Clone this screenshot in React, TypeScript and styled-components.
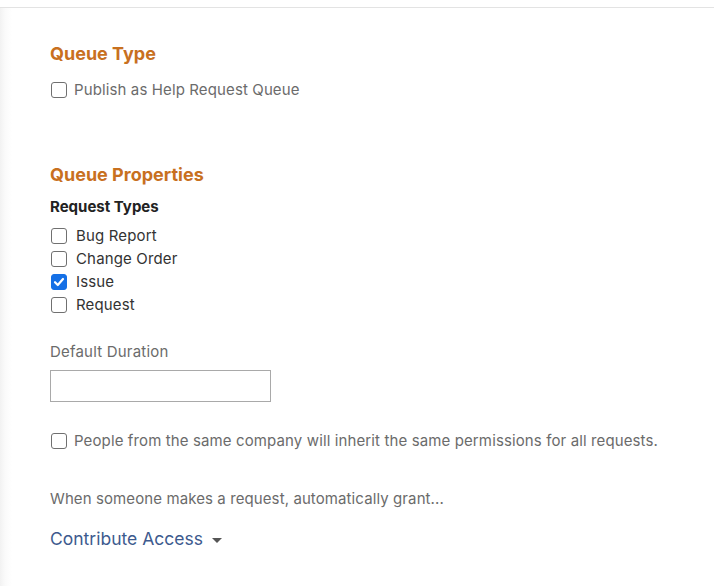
import React from "react";
import styled, { createGlobalStyle } from "styled-components";

const Global = createGlobalStyle`
  html, body { margin: 0; padding: 0; background: #fff; }
  body { font-family: Inter, "Open Sans", "Liberation Sans", sans-serif; }
`;

const Page = styled.div`
  width: 714px;
  height: 586px;
  overflow: hidden;
  display: flex;
  flex-direction: column;
`;

const TopBar = styled.div`
  height: 7px;
  border-bottom: 1px solid #e3e3e3;
  flex-shrink: 0;
`;

const Panel = styled.div`
  flex: 1;
  padding: 36px 0 0 50px;
  background: linear-gradient(to right, #f2f2f2 0px, #fafafa 5px, #ffffff 12px);
  display: flex;
  flex-direction: column;
`;

const Heading = styled.h2<{ $mt?: number }>`
  margin: ${(p) => p.$mt ?? 0}px 0 0 0;
  font-size: 18px;
  font-weight: 700;
  color: #c8701f;
  line-height: 20px;
`;

const SubHeading = styled.h3`
  margin: 13px 0 0 0;
  font-size: 15px;
  font-weight: 700;
  color: #222;
  line-height: 18px;
`;

const CheckList = styled.div<{ $mt: number }>`
  margin-top: ${(p) => p.$mt}px;
  display: flex;
  flex-direction: column;
  gap: 5px;
`;

const CheckRow = styled.label<{ $gap?: number; $gray?: boolean }>`
  display: flex;
  align-items: center;
  gap: ${(p) => p.$gap ?? 9}px;
  font-size: 15px;
  letter-spacing: ${(p) => (p.$gray ? 0.12 : 0.15)}px;
  line-height: 18px;
  color: ${(p) => (p.$gray ? "#6b6b6b" : "#333")};
`;

const Box = styled.span<{ $checked?: boolean }>`
  box-sizing: border-box;
  width: 16px;
  height: 16px;
  border: 1.5px solid ${(p) => (p.$checked ? "#1570e6" : "#707070")};
  background: ${(p) => (p.$checked ? "#1570e6" : "#fff")};
  border-radius: 3px;
  display: flex;
  align-items: center;
  justify-content: center;
  flex-shrink: 0;
  margin-left: 1px;
`;

const FieldLabel = styled.div`
  margin-top: 29px;
  font-size: 15px;
  letter-spacing: 0.2px;
  line-height: 18px;
  color: #6b6b6b;
`;

const Input = styled.div`
  margin-top: 9px;
  width: 219px;
  height: 30px;
  border: 1px solid #a9a9a9;
  background: #fff;
`;

const Note = styled.div`
  margin-top: 40px;
  font-size: 15px;
  letter-spacing: 0.1px;
  line-height: 18px;
  color: #6b6b6b;
`;

const Dropdown = styled.div`
  margin-top: 20px;
  display: flex;
  align-items: center;
  gap: 9px;
  font-size: 17.5px;
  line-height: 22px;
  color: #3d5a8e;
`;

const Caret = styled.span`
  width: 0;
  height: 0;
  border-left: 5px solid transparent;
  border-right: 5px solid transparent;
  border-top: 5px solid #555;
  margin-top: 2px;
`;

const Check = ({ checked }: { checked?: boolean }) => (
  <Box $checked={checked}>
    {checked && (
      <svg width="12" height="12" viewBox="0 0 12 12">
        <path d="M2 6.2 L4.8 9 L10 3" fill="none" stroke="#fff" strokeWidth="2.2" strokeLinecap="round" strokeLinejoin="round" />
      </svg>
    )}
  </Box>
);

export default function App() {
  const types = [
    { label: "Bug Report", checked: false },
    { label: "Change Order", checked: false },
    { label: "Issue", checked: true },
    { label: "Request", checked: false },
  ];
  return (
    <Page>
      <Global />
      <TopBar />
      <Panel>
        <Heading>Queue Type</Heading>
        <CheckList $mt={17}>
          <CheckRow $gray $gap={7}>
            <Check />
            Publish as Help Request Queue
          </CheckRow>
        </CheckList>
        <Heading $mt={66}>Queue Properties</Heading>
        <SubHeading>Request Types</SubHeading>
        <CheckList $mt={11}>
          {types.map((t) => (
            <CheckRow key={t.label}>
              <Check checked={t.checked} />
              {t.label}
            </CheckRow>
          ))}
        </CheckList>
        <FieldLabel>Default Duration</FieldLabel>
        <Input />
        <CheckList $mt={30}>
          <CheckRow $gray $gap={7}>
            <Check />
            People from the same company will inherit the same permissions for all requests.
          </CheckRow>
        </CheckList>
        <Note>When someone makes a request, automatically grant...</Note>
        <Dropdown>
          Contribute Access
          <Caret />
        </Dropdown>
      </Panel>
    </Page>
  );
}
